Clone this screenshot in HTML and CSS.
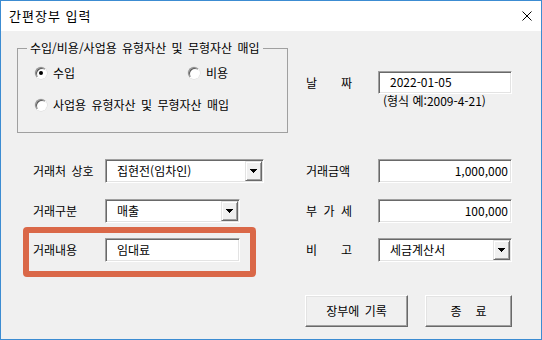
FILE: index.html
```html
<!DOCTYPE html>
<html lang="ko">
<head>
<meta charset="utf-8">
<title>간편장부 입력</title>
<link rel="stylesheet" href="styles.css">
</head>
<body>
<div class="window">
  <div class="titlebar">
    <span class="title">간편장부 입력</span>
    <span class="close" aria-label="닫기">
      <svg width="10" height="10" viewBox="0 0 10 10"><path d="M0.5 0.5L9.5 9.5M9.5 0.5L0.5 9.5" stroke="#000" stroke-width="1" fill="none"/></svg>
    </span>
  </div>
  <div class="client">
    <div class="row row-top">
      <fieldset class="group">
        <legend>수입/비용/사업용 유형자산 및 무형자산 매입</legend>
        <div class="radio-row">
          <label class="radio radio-a"><span class="dot checked"></span>수입</label>
          <label class="radio"><span class="dot"></span>비용</label>
        </div>
        <div class="radio-row radio-row-2">
          <label class="radio"><span class="dot"></span>사업용 유형자산 및 무형자산 매입</label>
        </div>
      </fieldset>
      <div class="date-cell">
        <div class="field-row">
          <span class="label spread"><span>날</span><span>짜</span></span>
          <div class="box date">2022-01-05</div>
        </div>
        <div class="hint">(형식 예:2009-4-21)</div>
      </div>
    </div>

    <div class="row row-2">
      <div class="field-row left">
        <span class="label">거래처 상호</span>
        <div class="box combo w-wide"><span class="val">집현전(임차인)</span><span class="drop"><svg width="7" height="4" viewBox="0 0 7 4"><path d="M0 0h7v1h-1v1h-1v1h-1v1h-1v-1h-1v-1h-1v-1h-1z" fill="#000"/></svg></span></div>
      </div>
      <div class="field-row">
        <span class="label">거래금액</span>
        <div class="box num">1,000,000</div>
      </div>
    </div>

    <div class="row row-3">
      <div class="field-row left">
        <span class="label">거래구분</span>
        <div class="box combo w-mid"><span class="val">매출</span><span class="drop"><svg width="7" height="4" viewBox="0 0 7 4"><path d="M0 0h7v1h-1v1h-1v1h-1v1h-1v-1h-1v-1h-1v-1h-1z" fill="#000"/></svg></span></div>
      </div>
      <div class="field-row">
        <span class="label spread"><span>부</span><span>가</span><span>세</span></span>
        <div class="box num">100,000</div>
      </div>
    </div>

    <div class="row row-4">
      <div class="field-row left marked">
        <span class="highlight"></span>
        <span class="label">거래내용</span>
        <div class="box w-mid">임대료</div>
      </div>
      <div class="field-row">
        <span class="label spread"><span>비</span><span>고</span></span>
        <div class="box combo"><span class="val">세금계산서</span><span class="drop"><svg width="7" height="4" viewBox="0 0 7 4"><path d="M0 0h7v1h-1v1h-1v1h-1v1h-1v-1h-1v-1h-1v-1h-1z" fill="#000"/></svg></span></div>
      </div>
    </div>

    <div class="buttons">
      <button class="btn btn-save">장부에 기록</button>
      <button class="btn btn-close"><span>종</span><span>료</span></button>
    </div>
  </div>
</div>
</body>
</html>
```

FILE: styles.css
```css
* { box-sizing: border-box; }

html, body {
  margin: 0;
  padding: 0;
  background: #f0f0f0;
}

body {
  font-family: "Noto Sans CJK KR", "Noto Sans", sans-serif;
  font-size: 12px;
  line-height: 16px;
  color: #000;
}

.window {
  width: 542px;
  height: 340px;
  border: 1px solid #3c8cd2;
  display: flex;
  flex-direction: column;
  background: #f0f0f0;
}

.titlebar {
  height: 30px;
  flex: none;
  background: #fff;
  display: flex;
  align-items: center;
  justify-content: space-between;
  padding: 0 9px 0 8px;
}

.title {
  font-size: 13px;
  letter-spacing: 1px;
}

.close {
  display: flex;
  width: 10px;
  height: 10px;
}

.client {
  flex: 1;
  padding: 9px 29px 0 16px;
}

.row {
  display: grid;
  grid-template-columns: 271px 206px;
  column-gap: 18px;
  align-items: center;
}

.row-top { align-items: start; }
.row-2 { margin-top: 26px; }
.row-3 { margin-top: 16px; }
.row-4 { margin-top: 15px; }

/* group box */
.group {
  margin: 0;
  padding: 9px 0 19px 0;
  border: 1px solid #a0a0a0;
  min-width: 0;
  width: 271px;
}

.group legend {
  margin-left: 9px;
  padding: 0 3px;
  line-height: 16px;
  word-spacing: 2px;
}

.radio-row {
  display: flex;
  padding-left: 17px;
  height: 16px;
  align-items: center;
}

.radio-row-2 { margin-top: 16px; }

.radio {
  display: flex;
  align-items: center;
  gap: 6px;
  word-spacing: 2px;
}

.radio-a { width: 153px; }

.dot {
  width: 12px;
  height: 12px;
  border-radius: 50%;
  background: #fff;
  border: 1px solid;
  border-color: #8a8a8a #fff #fff #8a8a8a;
  box-shadow: inset 1px 1px 0 #5a5a5a, 0 0 0 0.5px #d8d8d8;
  display: flex;
  align-items: center;
  justify-content: center;
}

.dot.checked::after {
  content: "";
  width: 4px;
  height: 4px;
  border-radius: 50%;
  background: #000;
}

/* date */
.date-cell {
  padding-top: 31px;
  display: flex;
  flex-direction: column;
}

.hint {
  margin-left: 77px;
  line-height: 14px;
}

/* field rows */
.field-row {
  display: flex;
  align-items: center;
}

.field-row.left { padding-left: 16px; }

.marked { position: relative; }

.highlight {
  position: absolute;
  left: 6px;
  top: -11px;
  width: 233px;
  height: 50px;
  border: 6px solid #da6848;
  border-radius: 4px;
  pointer-events: none;
}

.label {
  width: 72px;
  flex: none;
  word-spacing: 2px;
  white-space: nowrap;
}

.label.spread {
  display: flex;
  justify-content: space-between;
  width: 46px;
  margin-right: 26px;
}

.box {
  width: 134px;
  height: 24px;
  flex: none;
  background: #fff;
  border: 1px solid;
  border-color: #a0a0a0 #fff #fff #a0a0a0;
  box-shadow: inset 1px 1px 0 #696969, inset -1px -1px 0 #e3e3e3;
  display: flex;
  align-items: center;
  padding: 0 3px 1px 11px;
  white-space: nowrap;
}

.box.date { height: 23px; }

.box.num { justify-content: flex-end; }

.w-wide { width: 159px; }
.w-mid { width: 135px; }

.box.combo {
  padding-right: 1px;
  padding-bottom: 0;
}

.combo .val {
  flex: 1;
  padding-bottom: 1px;
}

.drop {
  width: 17px;
  height: 20px;
  flex: none;
  background: #f0f0f0;
  border: 1px solid;
  border-color: #e3e3e3 #696969 #696969 #e3e3e3;
  box-shadow: inset 1px 1px 0 #fff, inset -1px -1px 0 #a0a0a0;
  display: flex;
  align-items: center;
  justify-content: center;
}

.drop svg { display: block; }

/* buttons */
.buttons {
  display: flex;
  justify-content: flex-end;
  gap: 17px;
  margin-top: 33px;
}

.btn {
  height: 32px;
  font: inherit;
  color: #000;
  background: #f0f0f0;
  border: 1px solid;
  border-color: #fff #696969 #696969 #fff;
  box-shadow: inset -1px -1px 0 #a0a0a0, inset 1px 1px 0 #e3e3e3;
  padding: 0;
  display: flex;
  align-items: center;
  justify-content: center;
  word-spacing: 2px;
}

.btn-save { width: 103px; }

.btn-close {
  width: 87px;
  gap: 14px;
}
```
